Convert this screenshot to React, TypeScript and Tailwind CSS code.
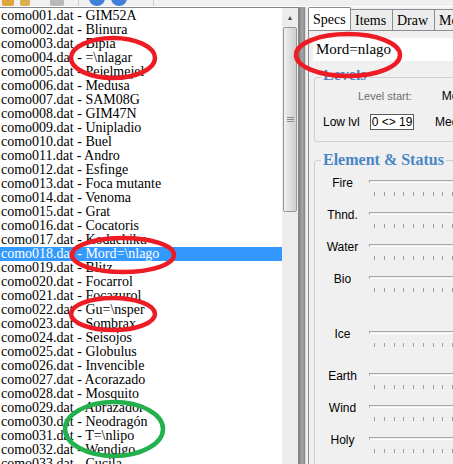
import React from "react";

const monsters = [
  "GIM52A",
  "Blinura",
  "Bipia",
  "=\\nlagar",
  "Pejelmejel",
  "Medusa",
  "SAM08G",
  "GIM47N",
  "Unipladio",
  "Buel",
  "Andro",
  "Esfinge",
  "Foca mutante",
  "Venoma",
  "Grat",
  "Cocatoris",
  "Kodachiku",
  "Mord=\\nlago",
  "Blitz",
  "Focarrol",
  "Focazurol",
  "Gu=\\nsper",
  "Sombrax",
  "Seisojos",
  "Globulus",
  "Invencible",
  "Acorazado",
  "Mosquito",
  "Abrazador",
  "Neodragón",
  "T=\\nlipo",
  "Wendigo",
  "Cucila",
];

const SELECTED = 17;

const elements = [
  { name: "Fire", gap: "mt-[7px]" },
  { name: "Thnd.", gap: "" },
  { name: "Water", gap: "" },
  { name: "Bio", gap: "" },
  { name: "Ice", gap: "mt-[23px]" },
  { name: "Earth", gap: "mt-[10px]" },
  { name: "Wind", gap: "" },
  { name: "Holy", gap: "" },
];

const serif = "font-['Liberation_Serif',serif]";
const sans = "font-['Liberation_Sans',Arial,sans-serif]";

function Toolbar() {
  return (
    <div className="flex h-[7px] items-end gap-[6px] overflow-hidden border-b border-white bg-[#f0f0f0] pl-[2px]">
      <span className="h-[14px] w-[12px] shrink-0 rounded-[2px] bg-[#e0a83a]" />
      <span className="h-[14px] w-[10px] shrink-0 rounded-[2px] bg-[#d9b04b]" />
      <span className="ml-[14px] h-[14px] w-[14px] shrink-0 rounded-[2px] bg-[#b9b9b9]" />
      <span className="ml-[8px] h-[14px] w-px shrink-0 bg-[#c9c9c9]" />
      <span className="ml-[4px] h-[16px] w-[16px] shrink-0 rounded-full bg-[#3f7fd6]" />
      <span className="h-[16px] w-[16px] shrink-0 rounded-full bg-[#3f7fd6]" />
      <span className="ml-[20px] h-[14px] w-px shrink-0 bg-[#c9c9c9]" />
    </div>
  );
}

function Scrollbar() {
  return (
    <div className="flex w-[16px] shrink-0 flex-col bg-[#ececec]">
      <div className="flex h-[19px] items-center justify-center text-[7px] leading-none text-[#4d4d4d]">▲</div>
      <div className="mx-px flex h-[185px] items-center justify-center rounded-[2px] border border-[#979797] bg-gradient-to-r from-[#f1f1f1] via-[#dedede] to-[#cfcfcf]">
        <div className="flex w-[7px] flex-col gap-px">
          <span className="h-px bg-[#8c8c8c]" />
          <span className="h-px bg-[#8c8c8c]" />
          <span className="h-px bg-[#8c8c8c]" />
        </div>
      </div>
    </div>
  );
}

function FileList() {
  return (
    <div className="flex h-full w-[299px] shrink-0 border-r border-t border-[#828790] bg-white">
      <ul className={`w-[282px] shrink-0 pt-px ${serif} text-[14px] text-black`}>
        {monsters.map((name, i) => {
          const num = String(i + 1).padStart(3, "0");
          return (
            <li
              key={num}
              className={`h-[14px] whitespace-nowrap pl-px leading-[14px] oldstyle-nums ${
                i === SELECTED ? "bg-[#3399ff] text-white" : ""
              }`}
            >
              como{num}.dat - {name}
            </li>
          );
        })}
      </ul>
      <Scrollbar />
    </div>
  );
}

function Splitter() {
  return (
    <div className="flex h-full w-[7px] shrink-0">
      <div className="w-[6px] bg-gradient-to-r from-[#7d7d7d] via-[#a9a9a9] to-[#858585]" />
      <div className="w-px bg-[#dadada]" />
    </div>
  );
}

function Trackbar({ name, gap }: { name: string; gap: string }) {
  return (
    <div className={`flex h-[32px] ${gap}`}>
      <div className={`w-[50px] shrink-0 pl-[5px] text-center ${sans} text-[12px] leading-[14px] text-black`}>{name}</div>
      <div className="ml-[4px] flex-1 pt-[4px]">
        <div className="h-[3px] border-l border-t border-b border-l-[#a0a0a0] border-t-[#a6a6a6] border-b-white" />
        <div className="ml-[5px] mt-[9px] flex gap-[8.75px]">
          {Array.from({ length: 9 }).map((_, i) => (
            <span key={i} className="h-[4px] w-px shrink-0 bg-[#a0a0a0]" />
          ))}
        </div>
      </div>
    </div>
  );
}

function Tab({ label, active, width }: { label: string; active?: boolean; width: string }) {
  return (
    <div
      className={`flex shrink-0 items-center border border-b-0 border-[#898c95] pl-[4px] ${width} ${
        active ? "h-[23px] rounded-t-[2px] bg-white" : "h-[21px] border-l-0 bg-[#ececec]"
      }`}
    >
      {label}
    </div>
  );
}

function SpecsPanel() {
  return (
    <div className="flex h-full min-w-0 flex-1 flex-col overflow-hidden bg-[#f0f0f0]">
      <div className={`flex h-[23px] items-end pl-[2px] ${serif} text-[14px] text-black`}>
        <Tab label="Specs" active width="w-[43px]" />
        <Tab label="Items" width="w-[42px]" />
        <Tab label="Draw" width="w-[42px]" />
        <Tab label="Mon" width="w-[40px]" />
      </div>
      <div className="ml-[2px] flex-1 border-l border-t border-[#898c95] bg-[#f0f0f0]">
        <div className={`ml-[4px] mt-[7px] flex h-[23px] items-center bg-white pl-[3px] ${serif} text-[15px] text-black`}>
          Mord=nlago
        </div>

        <fieldset className="ml-[5px] mt-[9px] w-[220px] rounded-[3px] border border-[#cfcfcf] pb-[11px]">
          <legend className="ml-[6px] px-[2px]">
            <span className={`flex h-[14px] flex-col justify-end overflow-hidden ${serif} text-[16px] font-bold leading-[18px] text-[#4a86c5]`}>
              <span className="block">Levels</span>
            </span>
          </legend>
          <div className={`mt-[5px] flex h-[14px] items-center ${sans} text-[11px]`}>
            <span className="ml-[43px] text-[#6d6d6d]">Level start:</span>
            <span className="ml-[30px] text-[12px] text-black">Medium</span>
          </div>
          <div className={`mt-[11px] flex h-[16px] items-center ${sans} text-[12px] text-black`}>
            <span className="ml-[8px] w-[47px]">Low lvl</span>
            <span className="flex h-[16px] w-[44px] items-center justify-center border border-[#5a5a5a] bg-white">0 &lt;&gt; 19</span>
            <span className="ml-[21px]">Med lvl</span>
          </div>
        </fieldset>

        <fieldset className="ml-[5px] mt-[9px] w-[220px] rounded-[3px] border border-[#cfcfcf] pb-[20px]">
          <legend className={`ml-[6px] px-[2px] ${serif} text-[16px] font-bold leading-[18px] text-[#4a86c5]`}>
            Element &amp; Status
          </legend>
          {elements.map((el) => (
            <Trackbar key={el.name} name={el.name} gap={el.gap} />
          ))}
        </fieldset>
      </div>
    </div>
  );
}

// paint-style marker rings drawn over the window
function Marks() {
  return (
    <svg className="pointer-events-none absolute inset-0" width="453" height="464" viewBox="0 0 453 464">
      <g fill="none" strokeWidth="4.5">
        <ellipse cx="113" cy="58" rx="42" ry="20" stroke="#ed1c24" />
        <ellipse cx="348" cy="55" rx="52" ry="21" stroke="#ed1c24" />
        <ellipse cx="123" cy="255" rx="51" ry="17" stroke="#ed1c24" />
        <ellipse cx="113" cy="314" rx="42" ry="16" stroke="#ed1c24" />
        <ellipse cx="114" cy="429" rx="49" ry="27" stroke="#22b14c" />
      </g>
    </svg>
  );
}

export default function App() {
  return (
    <div className="relative h-[464px] w-[453px] overflow-hidden bg-[#f0f0f0]">
      <Toolbar />
      <div className="flex h-[457px]">
        <FileList />
        <Splitter />
        <SpecsPanel />
      </div>
      <Marks />
    </div>
  );
}
